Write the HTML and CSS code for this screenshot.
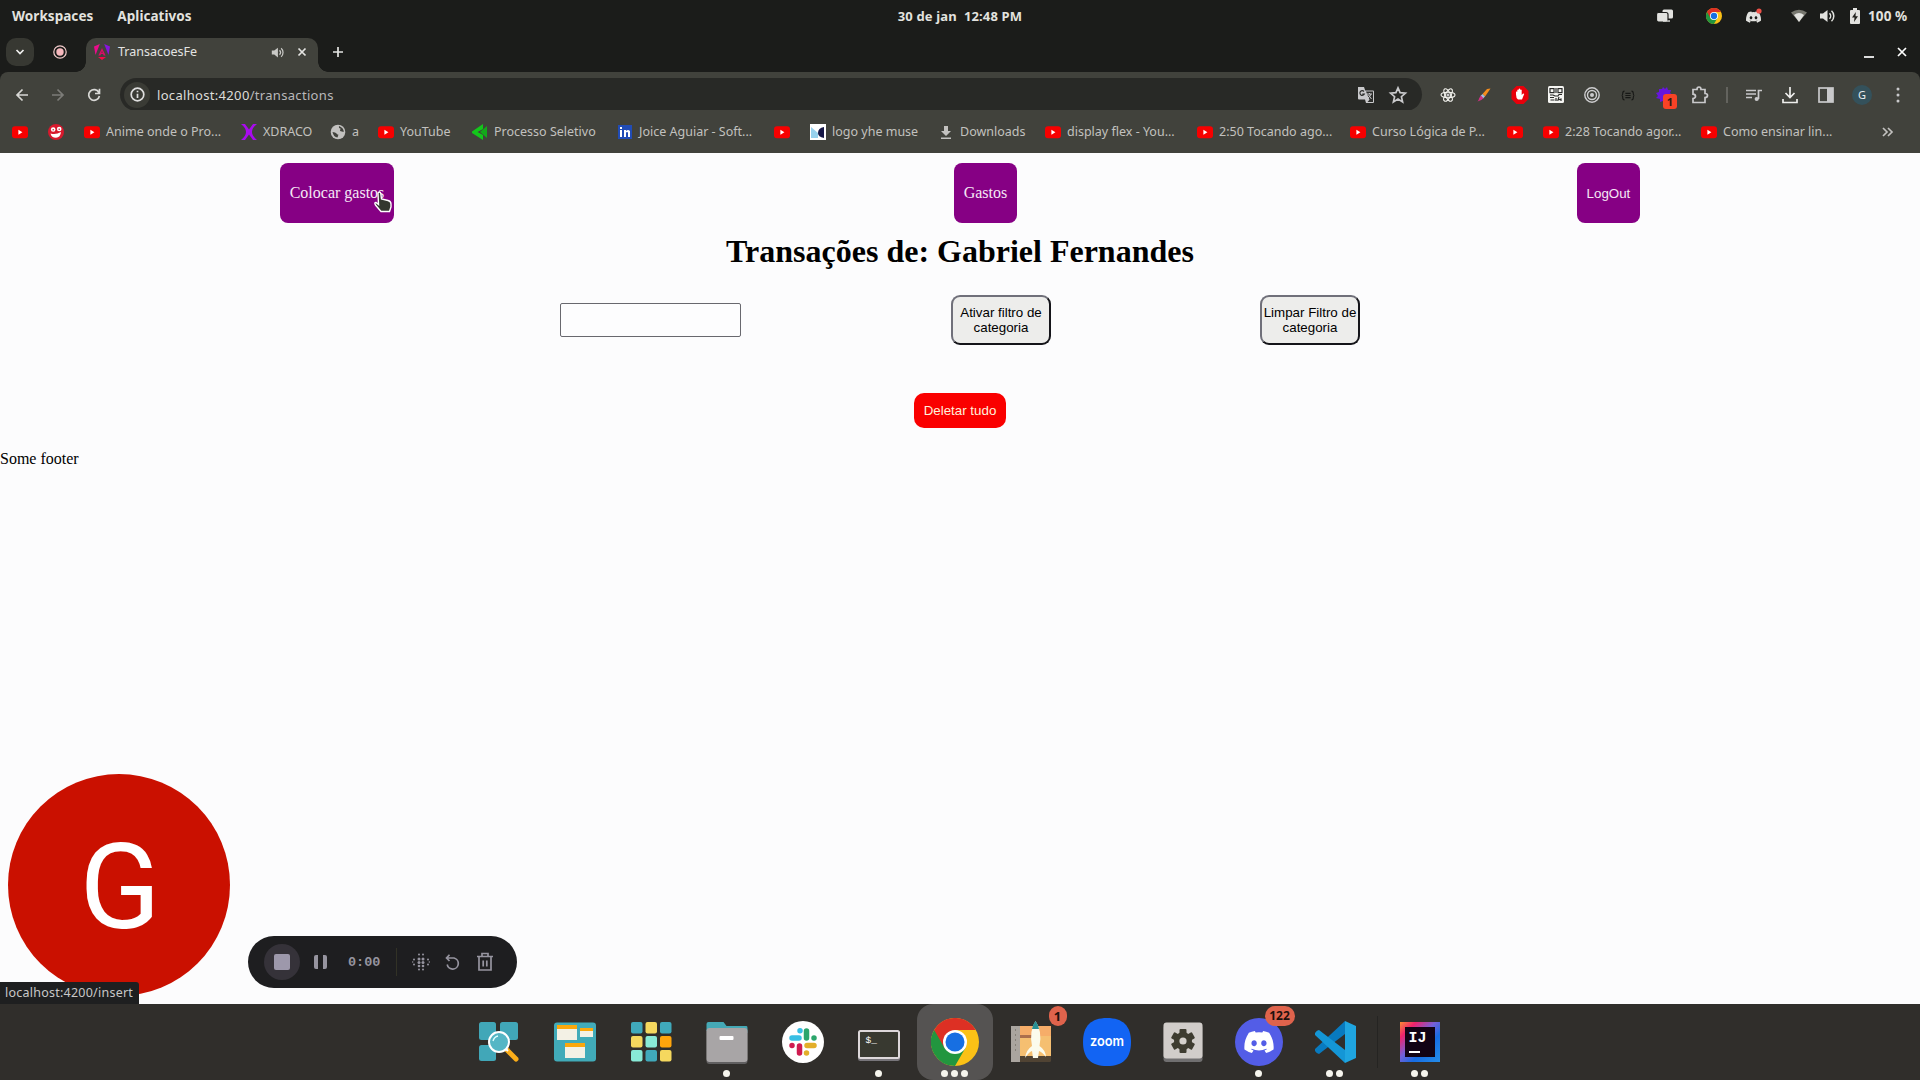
FILE: index.html
```html
<!DOCTYPE html>
<html lang="pt-BR">
<head>
<meta charset="utf-8">
<title>TransacoesFe</title>
<link rel="stylesheet" href="styles.css">
</head>
<body>
<svg class="defs" width="0" height="0">
  <symbol id="yt" viewBox="0 0 16 16"><rect x="0" y="2.2" width="16" height="12" rx="3" fill="#f70000"/><path d="M6.4 5.7v5l4-2.5z" fill="#fff"/></symbol>
  <symbol id="chrome" viewBox="0 0 48 48"><circle cx="24" cy="24" r="24" fill="#fbc116"/><path d="M24 24L3.2 12A24 24 0 0 0 24 48L34.4 30z" fill="#22963f"/><path d="M24 12H44.8A24 24 0 0 0 3.2 12L13.6 30z" fill="#dd3024"/><circle cx="24" cy="24" r="12" fill="#fff"/><circle cx="24" cy="24" r="9.5" fill="#176fe2"/></symbol>
  <symbol id="discord" viewBox="0 0 24 18"><path d="M20.3 1.5A20 20 0 0 0 15.4 0l-.7 1.3a18 18 0 0 0-5.4 0L8.6 0a20 20 0 0 0-4.9 1.5C.6 6.2-.3 10.700.1 15.100A20 20 0 0 0 6.200 18l1.300-2.100-2-.95.5-.4a14 14 0 0 0 12 0l.5.4-2 .95L17.800 18a20 20 0 0 0 6.100-2.900c.5-5.100-.9-9.500-3.600-13.600zM8 12.400c-1.200 0-2.200-1.100-2.200-2.400S6.800 7.600 8 7.600s2.200 1.100 2.200 2.400S9.200 12.400 8 12.400zm8 0c-1.200 0-2.200-1.100-2.200-2.400s1-2.400 2.200-2.400 2.200 1.100 2.200 2.400-1 2.400-2.200 2.400z"/></symbol>
  <symbol id="speaker" viewBox="0 0 16 16"><path d="M1 5.500h3L8.500 2v12L4 10.500H1z"/><path d="M10.500 5.200a4 4 0 0 1 0 5.600M12.500 2.800a7 7 0 0 1 0 10.400" fill="none" stroke="currentColor" stroke-width="1.500"/></symbol>
</svg>

<header class="system-bar">
  <nav class="system-menu"><span>Workspaces</span><span>Aplicativos</span></nav>
  <div class="clock">30 de jan&nbsp; 12:48 PM</div>
  <div class="tray">
    <svg class="tray-windows" width="16" height="16" viewBox="0 0 16 16"><rect x="5.500" y="1.500" width="10.500" height="9" rx="1.500"/><rect x="-.5" y="4.500" width="11.500" height="9.500" rx="2" stroke="#1b1c1a" stroke-width="1.200"/><path d="M6 12.500V14h7v-2z" opacity=".7"/></svg>
    <svg class="tray-chrome" width="16" height="16"><use href="#chrome"/></svg>
    <svg class="tray-discord" width="16" height="16" viewBox="0 0 16 16"><use href="#discord" x="0" y="3" width="15" height="12"/><circle cx="13" cy="3" r="2.600" fill="#ee5148"/></svg>
    <svg class="tray-wifi" width="16" height="16" viewBox="0 0 16 16"><path d="M0 4.500Q8-.8 16 4.500L8 14z" fill="#77776f"/><path d="M3 7Q8 3 13 7L8 14z"/></svg>
    <svg class="tray-volume" width="16" height="16"><use href="#speaker"/></svg>
    <svg class="tray-battery" width="12" height="16" viewBox="0 0 12 16"><path d="M4 0h4v2h2q1 0 1 1v12q0 1-1 1H2q-1 0-1-1V3q0-1 1-1h2z"/><path d="M6.800 4L3 9.500h2.500L5 14l4-5.700H6.500z" fill="#20201d"/></svg>
    <span>100 %</span>
  </div>
</header>

<section class="tab-strip">
  <button class="tab-search"><svg width="12" height="12" viewBox="0 0 12 12"><path d="M2.500 4L6 7.500 9.500 4" class="line"/></svg></button>
  <svg class="recorder" width="16" height="16" viewBox="0 0 16 16"><circle cx="8" cy="8" r="6.200" fill="none" stroke="#f3cccc" stroke-width="1.200"/><circle cx="8" cy="8" r="3.700" fill="#f7b9be"/></svg>
  <div class="tab">
    <svg width="16" height="16" viewBox="0 0 16 16"><path d="M0 2.500L5.800 0 1.500 11z" fill="#ea0c8c"/><path d="M16 2.500L10.200 0l4.300 11z" fill="#8814dd"/><path d="M8 4l3.600 7.500H9.700L9 10H7l-.7 1.500H4.400zM7.300 8.800h1.400L8 7z" fill="#d90b68" fill-rule="evenodd"/><path d="M4 13h8l-4 3z" fill="#f5084b"/></svg>
    <span>TransacoesFe</span>
    <svg class="tab-audio" width="13" height="13"><use href="#speaker"/></svg>
    <svg class="tab-close" width="10" height="10" viewBox="0 0 10 10"><path d="M1.500 1.500l7 7m0-7l-7 7" class="line"/></svg>
  </div>
  <svg class="new-tab" width="12" height="12" viewBox="0 0 12 12"><path d="M6 1v10M1 6h10" class="line"/></svg>
  <div class="window-actions">
    <svg width="10" height="12" viewBox="0 0 10 12"><path d="M0 11h10" class="line"/></svg>
    <svg width="10" height="12" viewBox="0 0 10 12"><path d="M1 2l8 8m0-8l-8 8" class="line"/></svg>
  </div>
</section>

<section class="toolbar">
  <div class="nav-actions">
    <svg width="14" height="14" viewBox="0 0 14 14"><path d="M13 7H2m5.500-5.500L2 7l5.500 5.500" class="line"/></svg>
    <svg class="disabled" width="14" height="14" viewBox="0 0 14 14"><path d="M1 7h11M6.500 1.500L12 7l-5.500 5.500" class="line"/></svg>
    <svg width="14" height="14" viewBox="0 0 14 14"><path d="M11.900 4.500A5.400 5.400 0 1 0 12.400 8M12.500.8v4.700H8" class="line"/></svg>
  </div>
  <div class="address">
    <span class="site-info"><svg width="15" height="15" viewBox="0 0 15 15"><circle cx="7.500" cy="7.500" r="6.300" class="line"/><path d="M7.500 6.800v4.200M7.500 3.800v1.500" class="line"/></svg></span>
    <span class="url">localhost:4200<i>/transactions</i></span>
    <svg class="translate" width="18" height="18" viewBox="0 0 18 18"><path d="M1 1h6l1.200 3.500H16q1 0 1 1V16q0 1-1 1H9l-1-3.500H2q-1 0-1-1z"/><path d="M9 5.500h7V16h-5.500l2-2.300z" fill="#2c2d2b"/><path d="M10 8h5M12.500 7v1M14 8q-1 3-3 4M11.500 9l3 4" fill="none" stroke="#c9c9cb"/><path d="M7 5.500a2.300 2.300 0 1 0 .3 2.500H5.300" fill="none" stroke="#2c2d2b" stroke-width="1.200"/></svg>
    <svg class="star" width="18" height="18" viewBox="0 0 18 18"><path d="M9 1.800l2.100 4.900 5.300.5-4 3.500 1.200 5.200L9 13.100l-4.600 2.800 1.200-5.200-4-3.500 5.300-.5z" class="line"/></svg>
  </div>
  <div class="extensions">
    <svg width="16" height="16" viewBox="0 0 16 16"><g fill="none" stroke="#f5f5f0" stroke-width="1.100"><ellipse cx="8" cy="8" rx="7" ry="2.700"/><ellipse cx="8" cy="8" rx="7" ry="2.700" transform="rotate(60 8 8)"/><ellipse cx="8" cy="8" rx="7" ry="2.700" transform="rotate(120 8 8)"/></g><circle cx="8" cy="8" r="1.500"/></svg>
    <svg width="16" height="16" viewBox="0 0 16 16"><path d="M14.500 1.500L9 9.500 6.500 7 11 2z" fill="#f58d1c"/><path d="M6.500 7L9 9.500l-2 2L4.500 9z" fill="#a7bde0"/><path d="M4.800 8.500l2.700 2.700Q5 14 1.500 14.500 3 13 3 11.500z" fill="#cf3282"/></svg>
    <svg width="18" height="18" viewBox="0 0 18 18"><path d="M5.500 0h7L17.500 5v8l-5 5h-7L.5 13V5z" fill="#e8000b"/><path d="M5 8.500V5.800q.7-.8 1.300 0V4q.8-.8 1.400 0V3q.8-.8 1.500 0v1q.8-.8 1.500 0v5l1.100-1.200q1-.5 1.400.1L11 13.500H7Q5 12 5 8.500z" fill="#fff"/></svg>
    <svg width="18" height="18" viewBox="0 0 18 18"><rect x="1" y="0" width="16" height="17" rx="1.500" fill="#f5f5f2"/><g fill="none" stroke="#292a28" stroke-width="1.200"><rect x="3" y="2.600" width="4" height="4"/><rect x="11" y="2.600" width="4" height="4"/><path d="M9 2v5M3 9h3l2 1h3l1-1.500h3M3 11.500h4M3.500 14h4M9 12v3M12 11l-1 3 3-1v2"/></g></svg>
    <svg width="16" height="16" viewBox="0 0 16 16"><g fill="none" stroke="#ceced0" stroke-width="1.400"><circle cx="8" cy="8" r="7.200"/><circle cx="8" cy="8" r="4.500"/></g><circle cx="8" cy="8" r="2"/></svg>
    <svg width="14" height="11" viewBox="0 0 16 12"><path d="M4 1Q2 1 2 3.500T.8 6Q2 6 2 8.500T4 11M12 1q2 0 2 2.500T15.200 6Q14 6 14 8.500T12 11M5 3.500h6M5 6h6M5 8.500h6" fill="none" stroke="#171816" stroke-width="1.300"/></svg>
    <span class="badged"><svg width="18" height="18" viewBox="0 0 18 18"><path d="M8 1l2 2 2-2 1 3h3l-1 3 3 2-3 2 1 3-4 1-2 2-2-2-3 1v-3l-4-1 2-2-2-3 3-1V3h3z" fill="#6715dc"/></svg><b>1</b></span>
    <svg width="18" height="18" viewBox="0 0 18 18"><path d="M2 3.500h4Q6 1 8 1t2 2.500h4v4q2.500 0 2.500 2T14 11.500v5H2v-4q2.500-.3 2.500-2.200T2 8.200z" class="line"/></svg>
  </div>
  <i class="toolbar-rule"></i>
  <div class="browser-actions">
    <svg width="16" height="16" viewBox="0 0 16 16"><path d="M0 3.500h10M0 7h10M0 10.500h6M12.500 12V3.500H16" class="line"/><circle cx="10.700" cy="12" r="2.100"/></svg>
    <svg class="bright" width="16" height="18" viewBox="0 0 16 18"><path d="M8 1v10M3.500 7L8 11.500 12.500 7M1 13v3.500h14V13" class="line"/></svg>
    <svg width="16" height="16" viewBox="0 0 16 16"><rect x="1" y="1" width="14" height="14" class="line"/><path d="M9 1h6v14H9z"/></svg>
    <span class="profile">G</span>
    <svg width="4" height="16" viewBox="0 0 4 16"><circle cx="2" cy="2" r="1.500"/><circle cx="2" cy="8" r="1.500"/><circle cx="2" cy="14" r="1.500"/></svg>
  </div>
</section>

<nav class="bookmarks">
  <a><svg><use href="#yt"/></svg></a>
  <a><svg viewBox="0 0 16 16"><circle cx="8" cy="8" r="8" fill="#d8192d"/><circle cx="5.200" cy="5.500" r="2.300" fill="#fff"/><circle cx="11.200" cy="5" r="2.300" fill="#fff"/><path d="M2.500 9.500q5.500 1.500 10.500-1.500-.5 5.500-5 5.800-4.500 0-5.500-4.300z" fill="#fff"/><path d="M4.500 5.800h1.500M10.500 5.200h1.500" fill="none" stroke="#a31022"/></svg></a>
  <a><svg><use href="#yt"/></svg><span>Anime onde o Pro...</span></a>
  <a><svg viewBox="0 0 16 16"><path d="M0 0h4l4 5.500L12 0h4q-5 4-5 8t5 8h-4l-4-5.500L4 16H0q5-4 5-8T0 0z" fill="#a80bee"/></svg><span>XDRACO</span></a>
  <a><svg viewBox="0 0 16 16"><circle cx="8" cy="8" r="7.300"/><path d="M2.500 8q3 0 4 1.500t2 1l-1 3q-4-.5-5-5.500zM9 2q-.5 2.500 1.500 2.500L10 7l3.700 1Q14 4 9 2z" fill="#41423c"/></svg><span>a</span></a>
  <a><svg><use href="#yt"/></svg><span>YouTube</span></a>
  <a><svg viewBox="0 0 16 16"><path d="M0 7.500L11 0v5L5.500 8l5.500 3v5L0 9z" fill="#13c61b"/><path d="M15 2v12L8 8z" fill="#13a81b"/></svg><span>Processo Seletivo</span></a>
  <a><svg viewBox="0 0 16 16"><rect x="1" y="1" width="14" height="14" fill="#214cb6"/><path d="M3 6h2v7H3zM3 3h2v2H3zM7 6h2v1q2-2 4 0v6h-2V8.500q-1-1-2 0V13H7z" fill="#fff"/></svg><span>Joice Aguiar - Soft...</span></a>
  <a><svg><use href="#yt"/></svg></a>
  <a><svg viewBox="0 0 16 16"><path d="M0 0h16v16H0z" fill="#fff"/><path d="M1 3l7 6v5H1z" fill="#97d1ed"/><path d="M8 9q0-5 6-6v11Q8 13 8 9z" fill="#161747"/></svg><span>logo yhe muse</span></a>
  <a><svg viewBox="0 0 16 16"><path d="M6 2h4v5h3l-5 5-5-5h3zM3 13.500h10V15H3z"/></svg><span>Downloads</span></a>
  <a><svg><use href="#yt"/></svg><span>display flex - You...</span></a>
  <a><svg><use href="#yt"/></svg><span>2:50 Tocando ago...</span></a>
  <a><svg><use href="#yt"/></svg><span>Curso Lógica de P...</span></a>
  <a><svg><use href="#yt"/></svg></a>
  <a><svg><use href="#yt"/></svg><span>2:28 Tocando agor...</span></a>
  <a><svg><use href="#yt"/></svg><span>Como ensinar lin...</span></a>
  <a><svg viewBox="0 0 16 16"><path d="M3 4l4 4-4 4m5-8l4 4-4 4" class="line"/></svg></a>
</nav>

<main class="page">
  <nav class="page-nav"><a>Colocar gastos</a><a>Gastos</a><button>LogOut</button></nav>
  <h1>Transações de: Gabriel Fernandes</h1>
  <div class="filters">
    <input type="text" aria-label="Categoria">
    <button>Ativar filtro de categoria</button>
    <button>Limpar Filtro de categoria</button>
  </div>
  <button class="delete-all">Deletar tudo</button>
  <footer>Some footer</footer>

  <div class="camera">G</div>
  <div class="recording">
    <span class="stop"></span>
    <span class="pause"></span>
    <time>0:00</time>
    <i></i>
    <svg class="blur-dots" width="18" height="18" viewBox="0 0 18 18"><circle cx="7" cy="1.500" r="1"/><circle cx="11" cy="1.500" r="1"/><circle cx="7" cy="6" r="1.500"/><circle cx="11" cy="6" r="1.500"/><circle cx="7" cy="9.500" r="1.500"/><circle cx="11" cy="9.500" r="1.500"/><circle cx="7" cy="13" r="1.300"/><circle cx="11" cy="13" r="1.300"/><circle cx="7" cy="16.500" r="1"/><circle cx="11" cy="16.500" r="1"/><circle cx="2" cy="6.500" r="1"/><circle cx="16" cy="6.500" r="1"/><circle cx="2" cy="11.500" r="1"/><circle cx="16" cy="11.500" r="1"/><circle cx=".7" cy="9" r=".7"/><circle cx="17.300" cy="9" r=".7"/></svg>
    <svg class="restart" width="16" height="16" viewBox="0 0 16 16"><path d="M1.500 4H9a5.600 5.600 0 1 1-6.800 6.500M4.500.7L1.500 4l3 3" class="line"/></svg>
    <svg class="trash" width="18" height="20" viewBox="0 0 18 20"><path d="M1 4.500h16M6 4V1.500h6V4M3 5v13h12V5M7.200 8.500v6M10.800 8.500v6" class="line"/></svg>
  </div>
  <div class="link-status">localhost:4200/insert</div>
  <svg class="pointer" width="18" height="22" viewBox="0 0 18 22"><path d="M4 2q2-2 2.800.5L7.500 8l6.500 1.500q3 .7 3 3.500v3l-1.500 4.500H7L1.500 14Q0 11.500 2 11.500l2.500 2z" fill="#33372f" stroke="#fff" stroke-width="1.400"/></svg>
</main>

<footer class="dock">
  <div class="app"><svg viewBox="0 0 48 48"><g fill="#41a7b8"><rect x="4" y="4" width="17" height="18" rx="2.500"/><rect x="25" y="4" width="18" height="18" rx="2.500"/><rect x="4" y="27" width="17" height="16" rx="2.500"/></g><path d="M32 32l9 9" stroke="#fbad19" stroke-width="5" stroke-linecap="round"/><path d="M30 30l3 3" stroke="#fff" stroke-width="2"/><circle cx="24" cy="24" r="10" fill="#55b6c5" stroke="#fff" stroke-width="2"/><path d="M18 23q1-4 5-5" fill="none" stroke="#dff" stroke-width="1.300"/></svg></div>
  <div class="app"><svg viewBox="0 0 48 48"><rect x="3" y="4.500" width="42" height="39" rx="3" fill="#41abb9"/><g fill="#f3f1e5"><path d="M6 7h20v15H6zM29 10h13v9H29zM14 25h20v15H14z"/></g><path d="M6 7h20v4H6zM29 10h13v3H29zM14 25h20v4H14z" fill="#fba80c"/></svg></div>
  <div class="app"><svg viewBox="0 0 48 48"><g fill="#40a9bb"><rect x="4" y="4" width="11.500" height="11.500" rx="2"/><rect x="33" y="4" width="11.500" height="11.500" rx="2"/><rect x="18.500" y="32" width="11.500" height="11.500" rx="2"/></g><g fill="#f5d85e"><rect x="18.500" y="4" width="11.500" height="11.500" rx="2"/><rect x="4" y="18" width="11.500" height="11.500" rx="2"/><rect x="33" y="32" width="11.500" height="11.500" rx="2"/></g><g fill="#88ead7"><rect x="18.500" y="18" width="11.500" height="11.500" rx="2"/><rect x="4" y="32" width="11.500" height="11.500" rx="2"/></g><rect x="33" y="18" width="11.500" height="11.500" rx="2" fill="#ffa50c"/></svg></div>
  <div class="app"><svg viewBox="0 0 48 48"><path d="M3.500 13V6q0-2 2-2h15l3 4h20q1 0 1 2v5z" fill="#45a9b6"/><rect x="3.500" y="11" width="41" height="35" rx="3" fill="#605f60"/><rect x="3.500" y="10" width="41" height="34" rx="3" fill="#a8a5a6"/><rect x="16.500" y="18" width="14" height="4" rx="1" fill="#fff"/></svg><span class="dots"><i></i></span></div>
  <div class="app"><svg viewBox="0 0 48 48"><circle cx="24" cy="24" r="21" fill="#fff"/><g fill="none" stroke-width="5.500" stroke-linecap="round"><path d="M13 20h7M21 12.700h.01" stroke="#38bfe4"/><path d="M27.500 13v7M35 20h.01" stroke="#2ca66c"/><path d="M35 27.500h-7M27.500 35h.01" stroke="#e3ae2a"/><path d="M20.500 35v-7M13 27.500h.01" stroke="#cf1b50"/></g></svg></div>
  <div class="app"><svg viewBox="0 0 48 48"><rect x="3" y="14" width="42" height="29" rx="2.500" fill="#77757a"/><rect x="4" y="13" width="40" height="27" rx="1.500" fill="#383930" stroke="#ddd8da" stroke-width="2"/><text x="10.500" y="24.500" font-size="9.500" fill="#fff" class="mono">$_</text></svg><span class="dots"><i></i></span></div>
  <div class="app active"><svg viewBox="0 0 48 48"><use href="#chrome"/></svg><span class="dots"><i></i><i></i><i></i></span></div>
  <div class="app"><svg viewBox="0 0 48 48"><rect x="4" y="8" width="40" height="36" rx="1.500" fill="#504333"/><rect x="13" y="8" width="31" height="30" fill="#f5bf71"/><path d="M13 8h31v10H13z" fill="#f6ad69"/><path d="M4 8h9v36H4z" fill="#aaa59f"/><path d="M13 17h12v3H13z" fill="#ac6f4d"/><path d="M8 12h1M8 17h1M8 22h1M8 27h1M8 32h1" stroke="#858077" stroke-width="2"/><path d="M28.500 3q7 10 4 25 6 4 6.500 11-4-5-7-6l-1 7h-5l-1-7q-3 1-7 7 1-8 7-12-3-15 3.500-25z" fill="#fbfbed"/><path d="M28.500 3q3 4 3.500 8h-7q.5-4 3.500-8z" fill="#288f93"/></svg><b class="badge">1</b></div>
  <div class="app"><svg viewBox="0 0 48 48"><path d="M24 0C40 0 48 8 48 24S40 48 24 48 0 40 0 24 8 0 24 0z" fill="#1264f3"/><text x="24" y="28" font-size="14" text-anchor="middle" fill="#fff" class="zoom" textLength="34" lengthAdjust="spacingAndGlyphs">zoom</text></svg></div>
  <div class="app"><svg viewBox="0 0 48 48"><rect x="4.500" y="7" width="39" height="37" rx="3" fill="#706f70"/><rect x="4.500" y="4.500" width="39" height="36" rx="3" fill="#d1cdca"/><g transform="translate(24 23)" fill="#3e3c30"><rect x="-3.500" y="-12" width="7" height="24" rx="1"/><rect x="-3.500" y="-12" width="7" height="24" rx="1" transform="rotate(60)"/><rect x="-3.500" y="-12" width="7" height="24" rx="1" transform="rotate(120)"/><circle r="9"/><circle r="3.600" fill="#d5d1cc"/></g></svg></div>
  <div class="app"><svg viewBox="0 0 48 48"><circle cx="24" cy="24" r="24" fill="#535de7"/><use href="#discord" x="9" y="13" width="30" height="22" fill="#fff"/></svg><b class="badge wide">122</b><span class="dots"><i></i></span></div>
  <div class="app"><svg viewBox="0 0 48 48"><path d="M34 3l11 5v32l-11 5z" fill="#1fa5e0"/><path d="M34 3v13L8 36q-2 0-4-3v-2z" fill="#087abf"/><path d="M4 17v-2q2-3 4-3l26 20v13z" fill="#1496d6"/></svg><span class="dots"><i></i><i></i></span></div>
  <i class="dock-rule"></i>
  <div class="app"><svg viewBox="0 0 48 48"><defs><linearGradient id="ij" x2="1" y2="1"><stop stop-color="#fd8a35"/><stop offset=".2" stop-color="#ef236d"/><stop offset=".45" stop-color="#7361d9"/><stop offset=".65" stop-color="#176ce2"/><stop offset="1" stop-color="#258de8"/></linearGradient></defs><path d="M4 4h40v40H4z" fill="url(#ij)"/><path d="M9 9h30v30H9z" fill="#120314"/><text x="12.500" y="24" font-size="15" font-weight="700" fill="#fff" class="mono">IJ</text><path d="M13 33h11v2H13z" fill="#fff"/></svg><span class="dots"><i></i><i></i></span></div>
</footer>
</body>
</html>
```
FILE: styles.css
```css
* { box-sizing: border-box; }
body {
  margin: 0;
  width: 1920px;
  height: 1080px;
  overflow: hidden;
  display: flex;
  flex-direction: column;
  background: #1b1c1a;
  color: #deddda;
  font-family: "Noto Sans", sans-serif;
  font-size: 13px;
}
svg { display: block; fill: currentColor; flex: none; overflow: visible; }
.defs { position: absolute; }
.line { fill: none; stroke: currentColor; stroke-width: 1.7; }
button { font-family: "Liberation Sans", Arial, sans-serif; }
.mono { font-family: "Liberation Mono", monospace; }
.zoom { font-family: Inter, sans-serif; font-weight: 600; }

.system-bar {
  height: 32px;
  display: grid;
  grid-template-columns: 1fr 126px 1fr;
  align-items: center;
  font-weight: 700;
  color: #e2e2df;
  white-space: nowrap;
}
.system-menu { display: flex; gap: 24px; padding-left: 12px; font-size: 13.500px; }
.system-menu span { letter-spacing: .05px; }
.clock { display: flex; justify-content: center; letter-spacing: .15px; }
.tray { display: flex; justify-content: flex-end; align-items: center; padding-right: 12px; }
.tray-windows { margin-right: 33px; }
.tray-chrome { margin-right: 24px; }
.tray-discord { margin-right: 29px; }
.tray-wifi { margin-right: 12px; }
.tray-volume { margin-right: 14px; }
.tray-battery { margin-right: 7px; }
.tray span { width: 40px; font-size: 13.500px; letter-spacing: .1px; }

.tab-strip { height: 40px; display: flex; align-items: center; color: #e4e4e2; }
.tab-search {
  width: 28px;
  height: 28px;
  margin-left: 6px;
  padding: 0;
  border: 0;
  border-radius: 10px;
  background: #373832;
  color: #f0f0ee;
  display: grid;
  place-items: center;
}
.recorder { margin: 0 18px; }
.tab {
  position: relative;
  align-self: flex-end;
  width: 232px;
  height: 34px;
  padding: 0 11px 6px 8px;
  display: flex;
  align-items: center;
  border-radius: 10px 10px 0 0;
  background: #41423c;
}
.tab::before, .tab::after {
  content: "";
  position: absolute;
  bottom: 0;
  width: 10px;
  height: 10px;
}
.tab::before { left: -10px; background: radial-gradient(circle at 0 0, transparent 9.5px, #41423c 10px); }
.tab::after { right: -10px; background: radial-gradient(circle at 100% 0, transparent 9.5px, #41423c 10px); }
.tab span { margin: -2px 0 0 8px; width: 79px; font-size: 12.5px; letter-spacing: 0; }
.tab-audio { margin-left: 74px; color: #c9c9c6; }
.tab-close { margin-left: auto; }
.new-tab { margin-left: 14px; }
.window-actions { display: flex; gap: 23px; margin-left: auto; margin-right: 13px; color: #fff; }

.toolbar {
  height: 38px;
  padding: 0 4px;
  display: flex;
  align-items: center;
  background: #41423c;
  border-radius: 8px 8px 0 0;
  color: #c9c9cb;
}
.nav-actions { width: 116px; display: grid; grid-template-columns: repeat(3, 36px); justify-items: center; color: #d8d8d5; }
.nav-actions .disabled { color: #7c7c78; }
.address {
  width: 1302px;
  height: 33px;
  margin-top: 6px;
  padding: 0 15px 0 4px;
  display: flex;
  align-items: center;
  border-radius: 17px;
  background: #282926;
  align-self: flex-start;
}
.toolbar > :not(.address) { margin-top: 8px; }
.site-info { width: 26px; height: 26px; border-radius: 13px; display: grid; place-items: center; background: #3a3b35; color: #dedede; }
.url { margin-left: 7px; letter-spacing: .32px; color: #deddda; }
.url i { font-style: normal; color: #b9b8ba; }
.translate { margin-left: auto; margin-right: 14px; }
.extensions { width: 288px; margin-left: 8px; display: grid; grid-template-columns: repeat(8, 36px); place-items: center; }
.badged { position: relative; }
.badged b {
  position: absolute;
  left: 8px;
  top: 8px;
  width: 14px;
  height: 15px;
  border-radius: 3px;
  background: #f94226;
  color: #321b12;
  font: 700 11px/15px "Noto Sans", sans-serif;
  text-align: center;
}
.toolbar-rule { width: 2px; height: 16px; margin-left: 8px; margin-right: 8px; background: #63635e; }
.browser-actions { width: 180px; display: grid; grid-template-columns: repeat(5, 36px); place-items: center; }
.bright { color: #eeeeec; }
.profile { width: 20px; height: 20px; border-radius: 50%; background: #34515b; color: #e8eef0; font-size: 11px; line-height: 20px; text-align: center; }

.bookmarks {
  height: 43px;
  padding: 1px 0 0 12px;
  display: grid;
  grid-template-columns: 36px 36px 157px 89px 48px 94px 145px 157px 36px 128px 107px 152px 153px 157px 36px 158px 179px 28px;
  align-items: center;
  background: #41423c;
  color: #c2c1bf;
  white-space: nowrap;
  font-size: 12.5px;
}
.bookmarks a { display: flex; gap: 6px; align-items: center; }
.bookmarks svg { width: 16px; height: 16px; }
.bookmarks span { line-height: 20px; }

.page {
  position: relative;
  height: 851px;
  background: #fcfcfd;
  color: #000;
  font: 16px "Liberation Serif", "Times New Roman", serif;
}
.page-nav { display: flex; justify-content: space-around; padding-top: 10px; }
.page-nav a, .page-nav button {
  height: 60px;
  padding: 0 10px;
  border: 0;
  border-radius: 8px;
  background: #860084;
  color: #f5e8f5;
  line-height: 60px;
}
.page-nav button { padding-top: 1px; font-size: 13.333px; }
h1 { margin: 10px 0 0; font-size: 32px; line-height: 37px; text-align: center; }
.filters { display: flex; align-items: center; gap: 210px; margin: 25px 0 0 560px; }
.filters input { width: 181px; height: 34px; margin: 0; padding: 0; border: 1px solid #68686e; border-radius: 2px; background: #fdfdfe; }
.filters button {
  width: 100px;
  height: 50px;
  padding: 0;
  border: 2px solid;
  border-color: #70707a #15151a #15151a #70707a;
  border-radius: 9px;
  background: #ededeb;
  color: #000;
  font-size: 13.333px;
  line-height: 15px;
}
.filters button + button { margin-left: -1px; }
.delete-all {
  display: block;
  width: 92px;
  height: 35px;
  margin: 48px auto 0;
  padding: 0;
  border: 0;
  border-radius: 10px;
  background: #fa0000;
  color: #fff0dd;
  font-size: 13.333px;
}
.page footer { margin-top: 22px; line-height: 18px; }
.camera {
  position: absolute;
  left: 8px;
  top: 621px;
  width: 222px;
  height: 222px;
  padding-left: 2px;
  border-radius: 50%;
  background: #ca1000;
  color: #fff;
  font: 119px/227px Roboto, sans-serif;
  text-align: center;
}
.recording {
  position: absolute;
  left: 248px;
  top: 783px;
  width: 269px;
  height: 52px;
  padding: 0 23px 0 16px;
  display: flex;
  align-items: center;
  border-radius: 26px;
  background: #1e1e20;
  color: #96949f;
}
.stop { width: 36px; height: 36px; border-radius: 50%; background: #353239; display: grid; place-items: center; }
.stop::before { content: ""; width: 16px; height: 16px; border-radius: 2px; background: #9d98ab; }
.pause { width: 13px; height: 14px; margin-left: 14px; border: solid #96949f; border-width: 0 4.5px; border-radius: 2px; }
.recording time { width: 34px; margin-left: 21px; font: 700 13.500px "Liberation Mono", monospace; }
.recording i { width: 1px; height: 28px; margin: 0 15px 0 14px; background: #323226; }
.restart { margin-left: 15px; }
.trash { margin-left: auto; }
.link-status {
  position: absolute;
  left: 0;
  bottom: 0;
  width: 139px;
  height: 22px;
  padding-left: 5px;
  border-radius: 0 3px 0 0;
  background: #1e1f20;
  color: #c8c8c8;
  font: 12.5px/21px "Noto Sans", sans-serif;
  letter-spacing: .24px;
  white-space: nowrap;
}
.pointer { position: absolute; left: 374px; top: 38px; }

.dock { height: 76px; padding-right: 2px; display: flex; justify-content: center; background: #302e2b; }
.app { position: relative; width: 76px; height: 76px; padding-top: 14px; display: flex; justify-content: center; }
.app > svg { width: 48px; height: 48px; }
.app.active { border-radius: 16px; background: #555352; }
.dots { position: absolute; left: 0; right: 0; bottom: 3px; display: flex; justify-content: center; gap: 3px; }
.dots i { width: 7px; height: 7px; border-radius: 50%; background: #f6f5ee; }
.dock-rule { width: 1px; height: 52px; margin: 12px 4px; background: #252422; }
.badge {
  position: absolute;
  left: 56px;
  top: 2px;
  width: 18px;
  height: 20px;
  border-radius: 10px;
  background: #df634c;
  color: #1d100d;
  font-size: 13px;
  line-height: 20px;
  text-align: center;
}
.badge.wide { left: 44px; width: 30px; font-size: 12px; }
```
